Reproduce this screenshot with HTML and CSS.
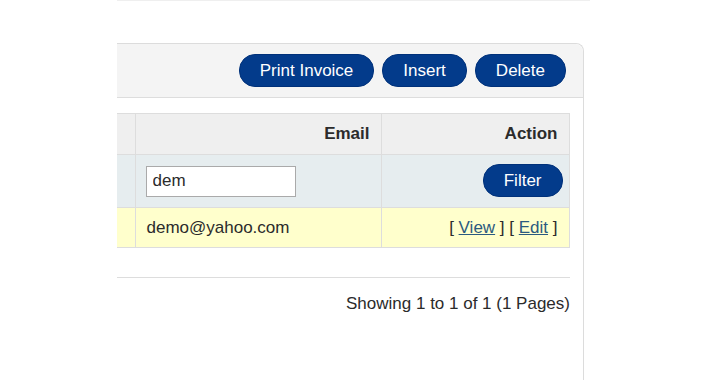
FILE: index.html
```html
<!DOCTYPE html>
<html>
<head>
<meta charset="utf-8">
<link rel="stylesheet" href="styles.css">
</head>
<body>
<div class="topline"></div>
<div class="panel">
  <div class="panel-heading">
    <button class="btn">Print Invoice</button>
    <button class="btn">Insert</button>
    <button class="btn">Delete</button>
  </div>
  <div class="panel-body">
    <table class="list">
      <colgroup>
        <col class="c1"><col class="c2"><col class="c3">
      </colgroup>
      <thead>
        <tr class="head-row">
          <td class="first"></td>
          <td class="right">Email</td>
          <td class="right">Action</td>
        </tr>
      </thead>
      <tbody>
        <tr class="filter-row">
          <td class="first"></td>
          <td class="left"><input class="field" type="text" value="dem"></td>
          <td class="right filter-cell"><button class="btn">Filter</button></td>
        </tr>
        <tr class="data-row">
          <td class="first"></td>
          <td class="left">demo@yahoo.com</td>
          <td class="right">[ <a href="#">View</a> ] [ <a href="#">Edit</a> ]</td>
        </tr>
      </tbody>
    </table>
    <div class="pagination">
      <div class="results">Showing 1 to 1 of 1 (1 Pages)</div>
    </div>
  </div>
</div>
</body>
</html>
```
FILE: styles.css
```css
html, body {
  margin: 0;
  padding: 0;
  background: #ffffff;
  font-family: "Liberation Sans", Arial, sans-serif;
  font-size: 17px;
  color: #2b2b2b;
}
body {
  height: 380px;
  overflow: hidden;
}
.topline {
  margin-left: 117px;
  width: 473px;
  height: 1px;
  background: #efefef;
}
.panel {
  margin-top: 42px;
  margin-left: 117px;
  width: 466px;
  height: 336px;
  border-top: 1px solid #dcdcdc;
  border-right: 1px solid #dcdcdc;
  border-top-right-radius: 8px;
}
.panel-heading {
  display: flex;
  justify-content: flex-end;
  gap: 8px;
  padding: 10px 17px 10px 0;
  background: #f4f4f4;
  border-bottom: 1px solid #dddddd;
  border-top-right-radius: 8px;
}
.btn {
  height: 33px;
  padding: 0 20px;
  border: 1px solid #00317a;
  border-radius: 16px;
  background: #033b8b;
  color: #ffffff;
  font-family: "Liberation Sans", Arial, sans-serif;
  font-size: 17px;
  line-height: 31px;
  cursor: pointer;
}
.btn-wide {
  padding: 0 22px;
}
.panel-body {
  padding: 15px 14px 0 0;
}
.list {
  width: 452px;
  table-layout: fixed;
  border-collapse: collapse;
}
.c1 { width: 18px; }
.c2 { width: 246px; }
.c3 { width: 188px; }
.list td {
  border: 1px solid #dddddd;
  padding: 0 11px;
}
.list td.first {
  border-left: none;
  padding: 0;
}
.right { text-align: right; }
.left { text-align: left; }
.head-row td {
  height: 40px;
  background: #efefef;
  font-weight: bold;
}
.filter-row td {
  height: 52px;
  background: #e6edef;
}
.filter-row td.filter-cell {
  padding-right: 6px;
}
.data-row td {
  height: 39px;
  background: #ffffcc;
}
.field {
  display: block;
  width: 150px;
  height: 31px;
  box-sizing: border-box;
  margin-left: -1px;
  padding: 0 6px;
  border: 1px solid #aaaaaa;
  font-family: "Liberation Sans", Arial, sans-serif;
  font-size: 17px;
  color: #2b2b2b;
}
.filter-cell .btn {
  vertical-align: middle;
  margin-top: -2px;
}
.data-row a {
  color: #2b5a80;
  text-decoration: underline;
}
.pagination {
  margin-top: 29px;
  width: 453px;
  border-top: 1px solid #dddddd;
  padding-top: 16px;
}
.results {
  text-align: right;
  line-height: 20px;
}
```
